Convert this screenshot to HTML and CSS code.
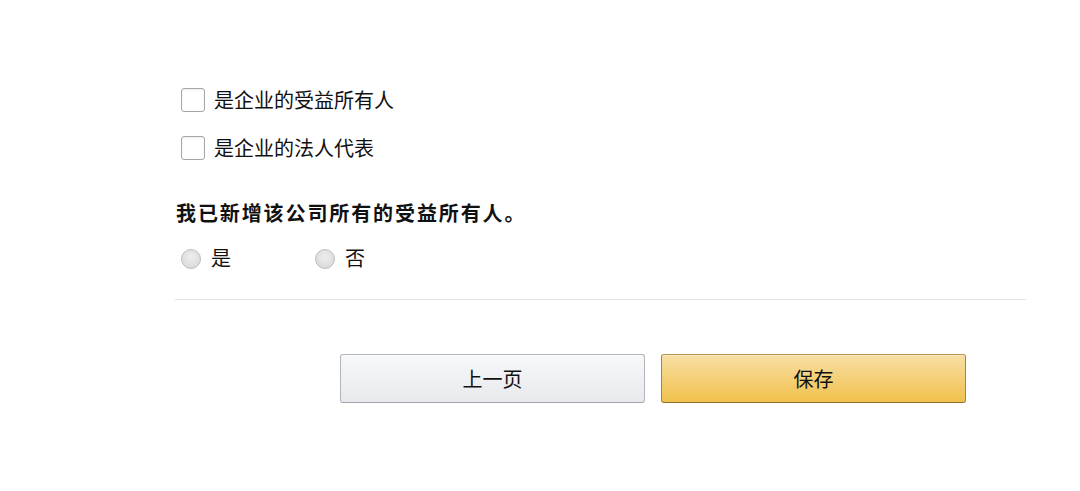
FILE: index.html
```html
<!DOCTYPE html>
<html lang="zh">
<head>
<meta charset="utf-8">
<link rel="stylesheet" href="styles.css">
</head>
<body>
<div class="page">
  <div class="checks">
    <label class="check"><span class="box"></span><span class="txt">是企业的受益所有人</span></label>
    <label class="check"><span class="box"></span><span class="txt">是企业的法人代表</span></label>
  </div>
  <div class="question">我已新增该公司所有的受益所有人。</div>
  <div class="radios">
    <label class="radio"><span class="dot"></span><span class="txt">是</span></label>
    <label class="radio"><span class="dot"></span><span class="txt">否</span></label>
  </div>
  <div class="divider"></div>
  <div class="actions">
    <button class="btn btn-prev">上一页</button>
    <button class="btn btn-save">保存</button>
  </div>
</div>
</body>
</html>
```

FILE: styles.css
```css
html, body {
  margin: 0;
  padding: 0;
  background: #fff;
}
body {
  font-family: "Liberation Sans", "Noto Sans CJK SC", sans-serif;
  color: #111;
}
.page {
  width: 851px;
  margin-left: 175px;
  padding-top: 88px;
}
.checks {
  display: flex;
  flex-direction: column;
  gap: 24px;
  padding-left: 6px;
}
.check {
  display: flex;
  align-items: center;
  height: 24px;
}
.box {
  width: 22px;
  height: 22px;
  border: 1px solid #a6a6a6;
  border-radius: 3px;
  background: #fff;
  box-shadow: inset 0 1px 2px rgba(0,0,0,0.08);
  flex: none;
}
.txt {
  font-size: 20px;
  line-height: 26px;
  color: #111;
}
.check .txt {
  margin-left: 9px;
  position: relative;
  top: 1px;
}
.question {
  margin-top: 41px;
  font-size: 20px;
  line-height: 26px;
  font-weight: bold;
  padding-left: 1px;
  letter-spacing: 1.9px;
}
.radios {
  margin-top: 22px;
  display: flex;
  align-items: center;
  height: 20px;
  padding-left: 6px;
}
.radio {
  display: flex;
  align-items: center;
  width: 134px;
}
.dot {
  width: 18px;
  height: 18px;
  border: 1px solid #bdbdbd;
  border-radius: 50%;
  background: radial-gradient(circle at 50% 40%, #eeeeee 0%, #dcdcdc 70%, #d2d2d2 100%);
  flex: none;
}
.radio .txt {
  margin-left: 10px;
}
.divider {
  margin-top: 30px;
  height: 1px;
  background: #e3e3e3;
}
.actions {
  margin-top: 54px;
  padding-left: 165px;
  display: flex;
  gap: 16px;
}
.btn {
  width: 305px;
  height: 49px;
  border-radius: 3px;
  font-family: "Liberation Sans", "Noto Sans CJK SC", sans-serif;
  font-size: 20px;
  color: #111;
  padding: 0;
  cursor: pointer;
}
.btn-prev {
  background: linear-gradient(to bottom, #f7f8fa, #e7e9ec);
  border: 1px solid #b1b4b9;
  border-bottom-color: #a2a5aa;
  box-shadow: inset 0 1px 0 rgba(255,255,255,0.6);
}
.btn-save {
  background: linear-gradient(to bottom, #f7dfa5, #f0c14b);
  border: 1px solid #a88734;
  border-color: #b8963f #a88734 #8f7230;
  box-shadow: inset 0 1px 0 rgba(255,255,255,0.4);
}
```
